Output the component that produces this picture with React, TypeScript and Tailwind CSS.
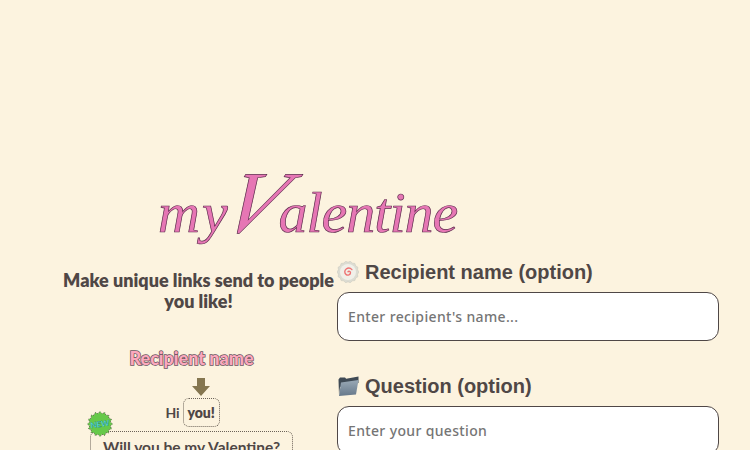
const burst = Array.from({ length: 32 }, (_, i) => {
  const r = i % 2 === 0 ? 12.5 : 10.5;
  const a = (i / 32) * Math.PI * 2;
  return `${(13 + r * Math.cos(a)).toFixed(2)},${(13 + r * Math.sin(a)).toFixed(2)}`;
}).join(" ");

function Naruto() {
  const teeth = Array.from({ length: 28 }, (_, i) => {
    const r = i % 2 === 0 ? 11 : 9.8;
    const a = (i / 28) * Math.PI * 2;
    return `${(11 + r * Math.cos(a)).toFixed(2)},${(11 + r * Math.sin(a)).toFixed(2)}`;
  }).join(" ");
  return (
    <svg width="22" height="22" viewBox="0 0 22 22" className="shrink-0">
      <polygon points={teeth} fill="#dcdcd2" stroke="#c4c4ba" strokeWidth="0.5" />
      <circle cx="11" cy="11" r="8" fill="#f1f0e9" />
      <path d="M11 10.800c.8-1 2.500-.5 2.500 1 0 2-2.700 2.900-4.300 1.800-2-1.300-1.800-4.300 0-5.600 1.800-1.300 4.300-1 5.700.6" fill="none" stroke="#ee7272" strokeWidth="1.400" strokeLinecap="round" />
    </svg>
  );
}

function Folder() {
  return (
    <svg width="22" height="22" viewBox="0 0 22 22" className="shrink-0">
      <defs>
        <linearGradient id="folderFront" x1="0" y1="0" x2="0" y2="1">
          <stop offset="0" stopColor="#9aa9b6" />
          <stop offset="1" stopColor="#66788a" />
        </linearGradient>
      </defs>
      <path d="M1.500 4.500 3 2.500h5l1.200 1.300L21.500 1.500V8L3 12l-1 8z" fill="#3f4a55" />
      <path d="M4 7.500 21.500 5l-2.500 14.500-17 1.500z" fill="url(#folderFront)" />
    </svg>
  );
}

const hand = "font-['Lato','Noto_Sans',sans-serif]";

export default function App() {
  return (
    <div className="h-[450px] w-[750px] overflow-hidden bg-[#fcf3df] pt-[165px]">
      <h1 className="ml-[158px] h-[95px] whitespace-nowrap font-['Liberation_Serif',serif] text-[58px] font-normal italic leading-[95px] tracking-[-1px] text-[#e676b4] [-webkit-text-stroke:0.7px_#5c2a4c]">
        <span className="tracking-[2px]">my</span>
        <span className="mr-[-2px] ml-[-2px] inline-block -skew-x-[24deg] text-[88px] leading-[60px]">V</span>
        alentine
      </h1>
      <div className="flex">
        <div className="ml-[60px] flex w-[277px] flex-col items-center pt-[10px]">
          <p className={`${hand} w-[277px] text-center text-[18px] font-extrabold leading-[21px] text-[#4f4746]`}>
            Make unique links send to people you like!
          </p>
          <p className={`${hand} mt-[35px] mr-[14px] text-[18px] font-black leading-[22px] text-[#fba8bd] [-webkit-text-stroke:1.5px_#6b5560] [paint-order:stroke_fill]`}>
            Recipient name
          </p>
          <svg width="18" height="18" viewBox="0 0 18 18" className="mt-[9px] ml-[4px]">
            <path d="M5 0h8v8h5l-9 10-9-10h5z" fill="#857650" />
          </svg>
          <div className="mt-[2px] mr-[12px] flex items-center gap-[3px] text-[#4f4746]">
            <span className={`${hand} text-[14px] font-bold`}>Hi</span>
            <span className={`${hand} flex h-[29px] w-[37px] items-center justify-center rounded-[6px] border border-dotted border-[#6b6258] text-[14px] font-extrabold`}>
              you!
            </span>
          </div>
          <div className="relative mt-[4px] mr-[14px] w-[203px]">
            <svg width="26" height="26" viewBox="0 0 26 26" className="absolute left-[-3px] top-[-20px]">
              <polygon points={burst} fill="#66c94a" stroke="#3d3d33" strokeWidth="0.7" strokeDasharray="1 1" />
              <text x="13" y="16" textAnchor="middle" transform="rotate(-8 13 13)" fontFamily="Lato, sans-serif" fontSize="8" fontWeight="700" fill="#4fe0e8" stroke="#1d4d55" strokeWidth="0.2">NEW</text>
            </svg>
            <div className={`${hand} h-[40px] rounded-[6px] border border-dotted border-[#6b6258] pt-[3px] text-center text-[15.500px] font-bold leading-[24px] text-[#4f4746]`}>
              Will you be my Valentine?
            </div>
          </div>
        </div>
        <div className="flex w-[382px] flex-col">
          <label className="flex h-[24px] items-center font-['Liberation_Sans',sans-serif] text-[20px] font-bold text-[#4f4746]">
            <Naruto />
            <span className="ml-[6px]">Recipient name (option)</span>
          </label>
          <input
            placeholder="Enter recipient's name..."
            className="mt-[8px] h-[49px] w-[382px] rounded-[12px] border border-[#4f4746] bg-white px-[10px] font-['Noto_Sans',sans-serif] text-[14px] font-medium tracking-[0.35px] placeholder:text-[#757575]"
          />
          <label className="mt-[33px] flex h-[24px] items-center font-['Liberation_Sans',sans-serif] text-[20px] font-bold text-[#4f4746]">
            <Folder />
            <span className="ml-[6px]">Question (option)</span>
          </label>
          <input
            placeholder="Enter your question"
            className="mt-[8px] h-[49px] w-[382px] rounded-[12px] border border-[#4f4746] bg-white px-[10px] font-['Noto_Sans',sans-serif] text-[14px] font-medium tracking-[0.35px] placeholder:text-[#757575]"
          />
        </div>
      </div>
    </div>
  );
}
